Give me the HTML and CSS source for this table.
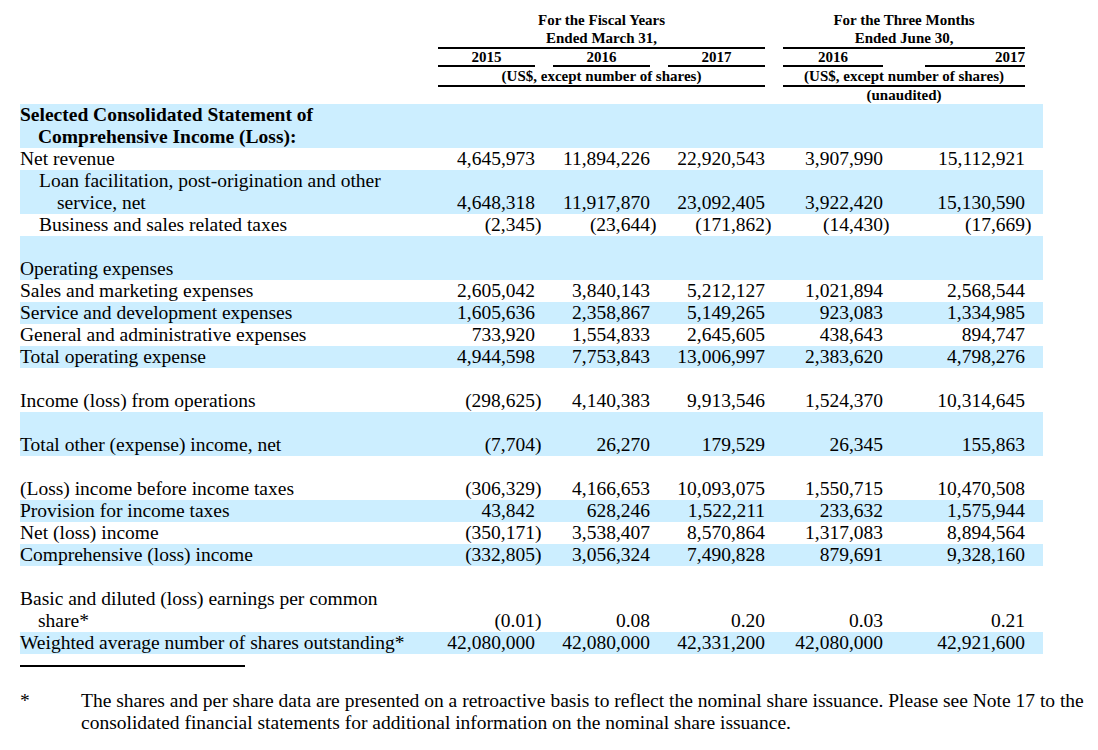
FILE: index.html
```html
<!DOCTYPE html>
<html>
<head>
<meta charset="utf-8">
<link rel="stylesheet" href="styles.css">
</head>
<body>
<table class="fin">
  <colgroup>
    <col class="c-label"><col class="c-val"><col class="c-par"><col class="c-val"><col class="c-par"><col class="c-val"><col class="c-par"><col class="c-val2"><col class="c-par2"><col class="c-val2"><col class="c-par">
  </colgroup>
  <thead>
    <tr class="h1">
      <td></td>
      <td colspan="5" class="hd rule">For the Fiscal Years<br>Ended March 31,</td>
      <td></td>
      <td colspan="3" class="hd rule">For the Three Months<br>Ended June 30,</td>
      <td></td>
    </tr>
    <tr class="h2">
      <td></td>
      <td class="hd rule">2015</td><td></td>
      <td class="hd rule">2016</td><td></td>
      <td class="hd rule">2017</td><td></td>
      <td class="hd rule">2016</td><td></td>
      <td class="hd rule right">2017</td><td></td>
    </tr>
    <tr class="h3">
      <td></td>
      <td colspan="5" class="hd rule">(US$, except number of shares)</td>
      <td></td>
      <td colspan="3" class="hd rule">(US$, except number of shares)</td>
      <td></td>
    </tr>
    <tr class="h4">
      <td></td>
      <td colspan="5"></td>
      <td></td>
      <td colspan="3" class="hd">(unaudited)</td>
      <td></td>
    </tr>
  </thead>
  <tbody>
    <tr class="blue">
      <td class="lbl bold hang">Selected Consolidated Statement of Comprehensive Income (Loss):</td>
      <td></td><td></td><td></td><td></td><td></td><td></td><td></td><td></td><td></td><td></td>
    </tr>
    <tr>
      <td class="lbl hang">Net revenue</td>
      <td class="v">4,645,973</td><td></td><td class="v">11,894,226</td><td></td><td class="v">22,920,543</td><td></td><td class="v">3,907,990</td><td></td><td class="v">15,112,921</td><td></td>
    </tr>
    <tr class="blue">
      <td class="lbl hang2">Loan facilitation, post-origination and other service, net</td>
      <td class="v">4,648,318</td><td></td><td class="v">11,917,870</td><td></td><td class="v">23,092,405</td><td></td><td class="v">3,922,420</td><td></td><td class="v">15,130,590</td><td></td>
    </tr>
    <tr>
      <td class="lbl hang2">Business and sales related taxes</td>
      <td class="v">(2,345</td><td class="p">)</td><td class="v">(23,644</td><td class="p">)</td><td class="v">(171,862</td><td class="p">)</td><td class="v">(14,430</td><td class="p">)</td><td class="v">(17,669</td><td class="p">)</td>
    </tr>
    <tr class="blue gap">
      <td class="lbl hang">Operating expenses</td>
      <td></td><td></td><td></td><td></td><td></td><td></td><td></td><td></td><td></td><td></td>
    </tr>
    <tr>
      <td class="lbl hang">Sales and marketing expenses</td>
      <td class="v">2,605,042</td><td></td><td class="v">3,840,143</td><td></td><td class="v">5,212,127</td><td></td><td class="v">1,021,894</td><td></td><td class="v">2,568,544</td><td></td>
    </tr>
    <tr class="blue">
      <td class="lbl hang">Service and development expenses</td>
      <td class="v">1,605,636</td><td></td><td class="v">2,358,867</td><td></td><td class="v">5,149,265</td><td></td><td class="v">923,083</td><td></td><td class="v">1,334,985</td><td></td>
    </tr>
    <tr>
      <td class="lbl hang">General and administrative expenses</td>
      <td class="v">733,920</td><td></td><td class="v">1,554,833</td><td></td><td class="v">2,645,605</td><td></td><td class="v">438,643</td><td></td><td class="v">894,747</td><td></td>
    </tr>
    <tr class="blue">
      <td class="lbl hang">Total operating expense</td>
      <td class="v">4,944,598</td><td></td><td class="v">7,753,843</td><td></td><td class="v">13,006,997</td><td></td><td class="v">2,383,620</td><td></td><td class="v">4,798,276</td><td></td>
    </tr>
    <tr class="gap">
      <td class="lbl hang">Income (loss) from operations</td>
      <td class="v">(298,625</td><td class="p">)</td><td class="v">4,140,383</td><td></td><td class="v">9,913,546</td><td></td><td class="v">1,524,370</td><td></td><td class="v">10,314,645</td><td></td>
    </tr>
    <tr class="blue gap">
      <td class="lbl hang">Total other (expense) income, net</td>
      <td class="v">(7,704</td><td class="p">)</td><td class="v">26,270</td><td></td><td class="v">179,529</td><td></td><td class="v">26,345</td><td></td><td class="v">155,863</td><td></td>
    </tr>
    <tr class="gap">
      <td class="lbl hang">(Loss) income before income taxes</td>
      <td class="v">(306,329</td><td class="p">)</td><td class="v">4,166,653</td><td></td><td class="v">10,093,075</td><td></td><td class="v">1,550,715</td><td></td><td class="v">10,470,508</td><td></td>
    </tr>
    <tr class="blue">
      <td class="lbl hang">Provision for income taxes</td>
      <td class="v">43,842</td><td></td><td class="v">628,246</td><td></td><td class="v">1,522,211</td><td></td><td class="v">233,632</td><td></td><td class="v">1,575,944</td><td></td>
    </tr>
    <tr>
      <td class="lbl hang">Net (loss) income</td>
      <td class="v">(350,171</td><td class="p">)</td><td class="v">3,538,407</td><td></td><td class="v">8,570,864</td><td></td><td class="v">1,317,083</td><td></td><td class="v">8,894,564</td><td></td>
    </tr>
    <tr class="blue">
      <td class="lbl hang">Comprehensive (loss) income</td>
      <td class="v">(332,805</td><td class="p">)</td><td class="v">3,056,324</td><td></td><td class="v">7,490,828</td><td></td><td class="v">879,691</td><td></td><td class="v">9,328,160</td><td></td>
    </tr>
    <tr class="gap">
      <td class="lbl hang">Basic and diluted (loss) earnings per common share*</td>
      <td class="v">(0.01</td><td class="p">)</td><td class="v">0.08</td><td></td><td class="v">0.20</td><td></td><td class="v">0.03</td><td></td><td class="v">0.21</td><td></td>
    </tr>
    <tr class="blue">
      <td class="lbl hang">Weighted average number of shares outstanding*</td>
      <td class="v">42,080,000</td><td></td><td class="v">42,080,000</td><td></td><td class="v">42,331,200</td><td></td><td class="v">42,080,000</td><td></td><td class="v">42,921,600</td><td></td>
    </tr>
  </tbody>
</table>
<div class="sep"></div>
<div class="note">
  <div class="star">*</div>
  <div class="note-text">The shares and per share data are presented on a retroactive basis to reflect the nominal share issuance. Please see Note 17 to the consolidated financial statements for additional information on the nominal share issuance.</div>
</div>
</body>
</html>
```

FILE: styles.css
```css
html, body {
  margin: 0;
  padding: 0;
  background: #ffffff;
  color: #000000;
  font-family: "Liberation Serif", "Times New Roman", serif;
}

body {
  padding: 11px 0 0 20px;
}

.fin {
  border-collapse: separate;
  border-spacing: 0;
  table-layout: fixed;
  width: 1023px;
  font-size: 19.5px;
  line-height: 22px;
}

.c-label { width: 418px; }
.c-val { width: 97px; }
.c-par { width: 18px; }
.c-val2 { width: 100px; }
.c-par2 { width: 42px; }

.fin td {
  padding: 0;
  vertical-align: bottom;
}

.hd {
  font-weight: bold;
  font-size: 15px;
  line-height: 18px;
  text-align: center;
}

.h2 .hd { line-height: 16px; }
.h4 td { height: 17px; line-height: 17px; }

.hd.right { text-align: right; }

.rule {
  border-bottom: 2px solid #000000;
}

.blue td {
  background: #cceeff;
}

.lbl {
  text-align: left;
}

.bold { font-weight: bold; }

.hang {
  padding-left: 18px !important;
  padding-right: 18px !important;
  text-indent: -18px;
}

.hang2 {
  padding-left: 37px !important;
  padding-right: 18px !important;
  text-indent: -18px;
}

.v {
  text-align: right;
  white-space: nowrap;
}

.p {
  text-align: left;
}

.gap td {
  padding-top: 22px;
}

.sep {
  width: 225px;
  height: 2px;
  background: #000000;
  margin-top: 11px;
}

.note {
  display: flex;
  margin-top: 23px;
  margin-right: 6px;
  font-size: 19.5px;
  line-height: 22px;
}

.star {
  flex: 0 0 61px;
}

.note-text {
  flex: 1;
}
```
